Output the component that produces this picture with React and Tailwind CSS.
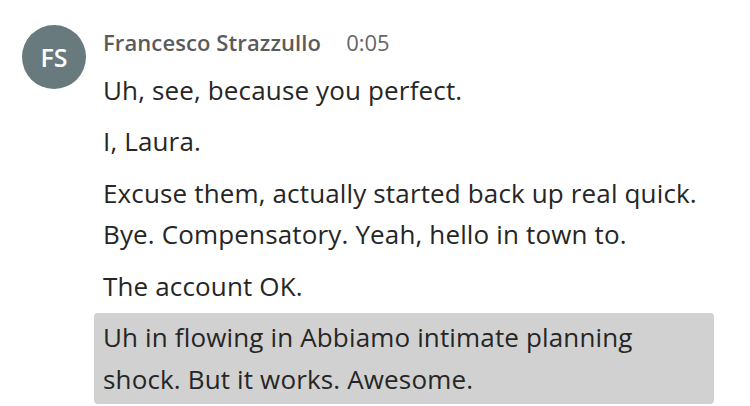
export default function App() {
  const font = { fontFamily: '"Open Sans", "Noto Sans", sans-serif' };
  return (
    <div className="w-[750px] h-[406px] bg-white overflow-hidden" style={font}>
      <div className="flex pl-[22px] pt-[25px] gap-[8px]">
        <div className="w-[64px] h-[64px] rounded-full bg-[#687a7e] flex items-center justify-center shrink-0">
          <span className="text-white text-[25px] leading-none font-semibold">FS</span>
        </div>
        <div className="w-[620px] flex flex-col">
          <div className="flex items-baseline px-[9px] pt-[2px] h-[40.5px] leading-[30px] whitespace-nowrap">
            <span className="text-[22px] font-semibold text-[#5b5b5b] tracking-[0.1px]">Francesco Strazzullo</span>
            <span className="text-[22px] text-[#666666] ml-[25px]">0:05</span>
          </div>
          <div className="text-[26px] leading-[41.5px] tracking-[0.15px] text-[#262626] flex flex-col gap-[2px] whitespace-nowrap">
            <div className="px-[9px] py-[4px] rounded-[4px]">Uh, see, because you perfect.</div>
            <div className="px-[9px] py-[4px] rounded-[4px]">I, Laura.</div>
            <div className="px-[9px] py-[4px] rounded-[4px]">
              <div>Excuse them, actually started back up real quick.</div>
              <div>Bye. Compensatory. Yeah, hello in town to.</div>
            </div>
            <div className="px-[9px] py-[4px] rounded-[4px]">The account OK.</div>
            <div className="px-[9px] py-[4px] rounded-[4px] bg-[#d1d1d1]">
              <div>Uh in flowing in Abbiamo intimate planning</div>
              <div>shock. But it works. Awesome.</div>
            </div>
          </div>
        </div>
      </div>
    </div>
  );
}
